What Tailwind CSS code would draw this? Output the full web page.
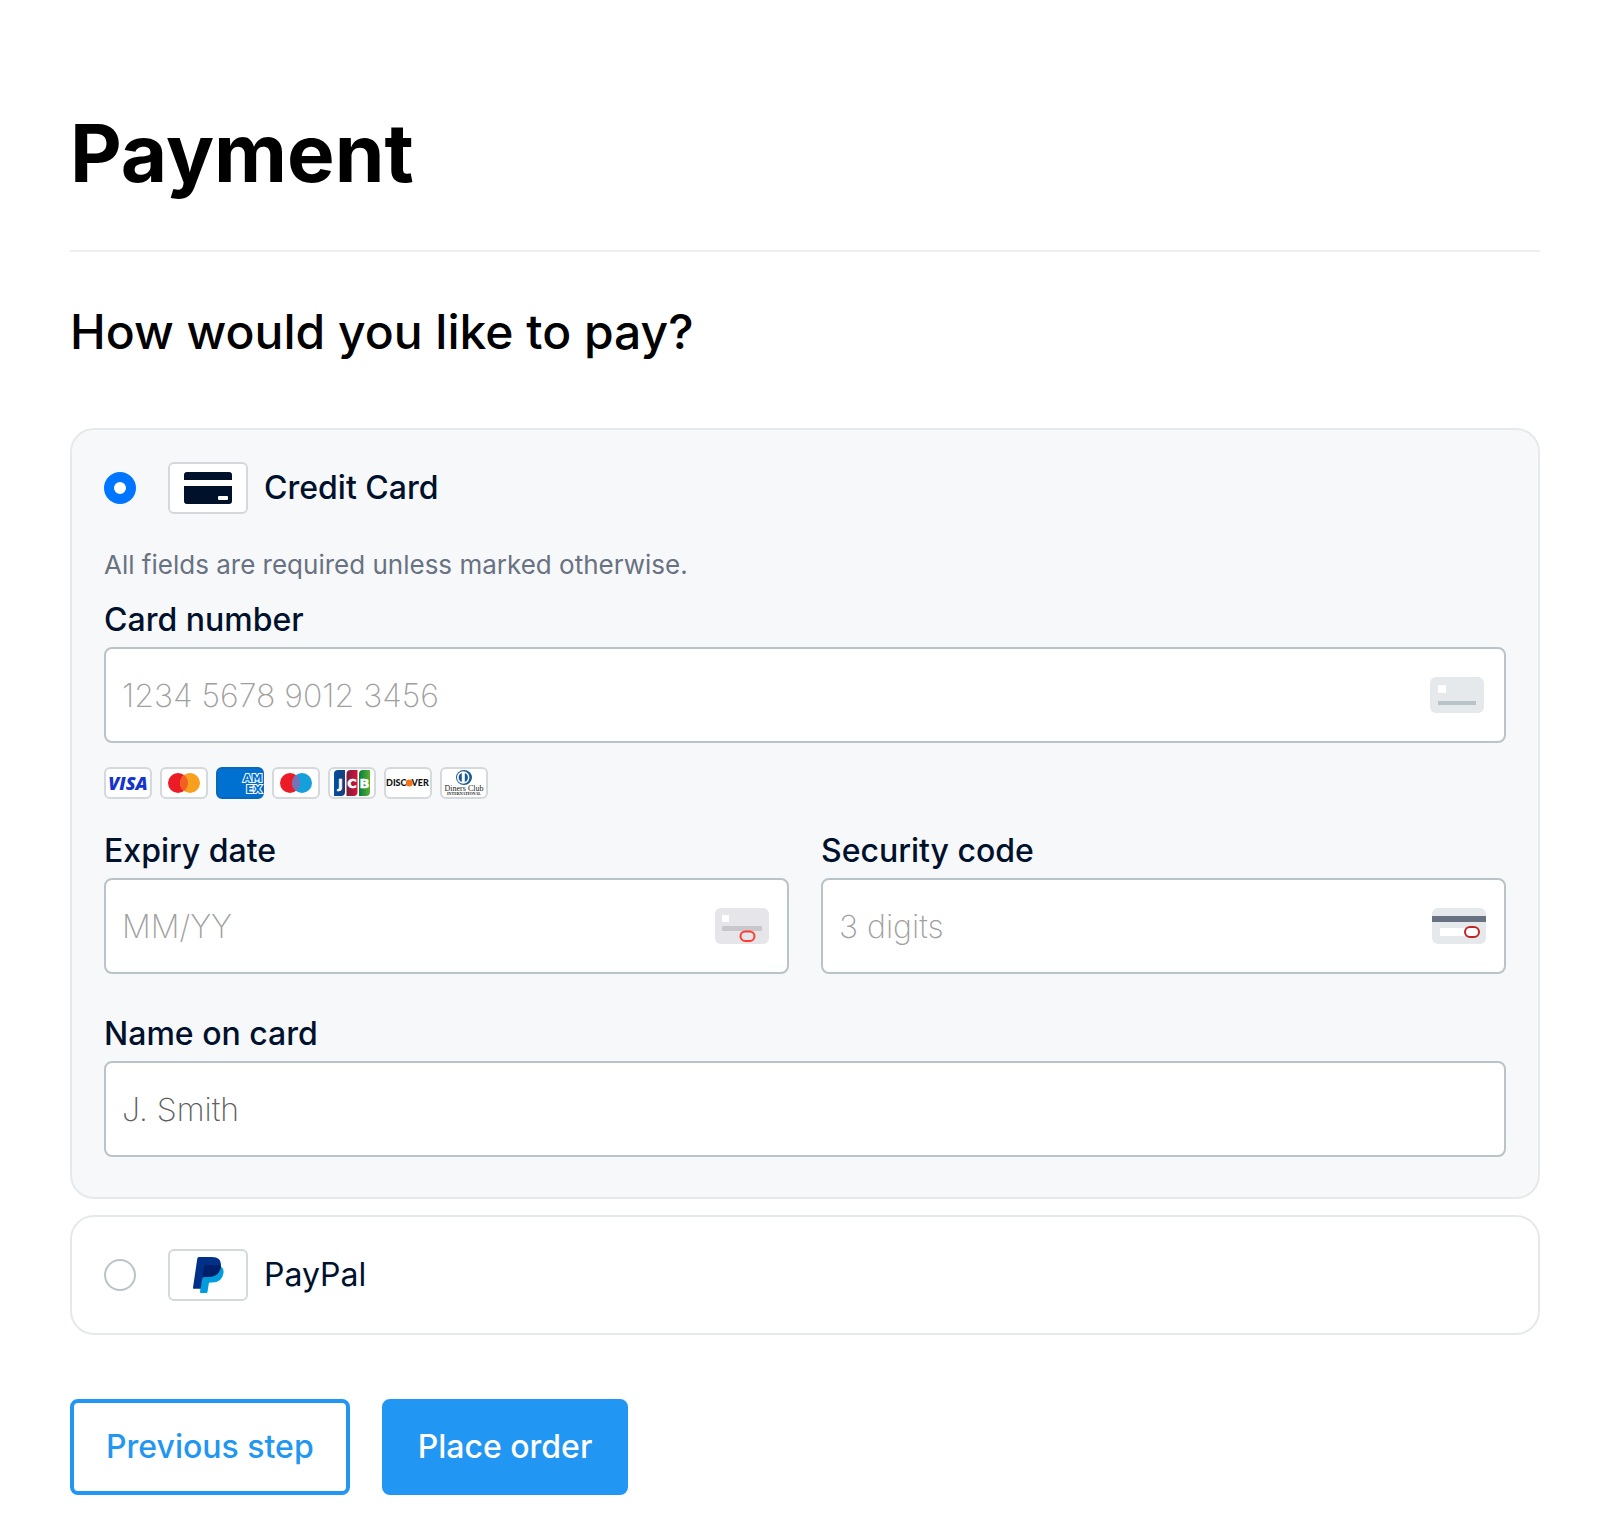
<!DOCTYPE html>
<html lang="en">
<head>
    <meta charset="UTF-8">
    <meta name="viewport" content="width=device-width, initial-scale=1.0">
    <title>Payment</title>
    <script src="https://cdn.jsdelivr.net/npm/@tailwindcss/browser@4"></script>
</head>
<body class="bg-white font-['Inter',sans-serif] text-black">

    <main class="pt-[105px] pb-11 pl-[70px] pr-[72px]">
        <h1 class="text-[80px] leading-24 font-bold">Payment</h1>
        <hr class="mt-[49px] border-t-2 border-[#eeeeee]">
        <h2 class="mt-12 text-5xl leading-16 font-medium">How would you like to pay?</h2>

        <form class="mt-16">
            <!-- Credit card -->
            <section class="rounded-3xl border-2 border-[#e6e9eb] bg-[#f7f8f9] px-8 pt-8 pb-10 text-[#00112c]">
                <div class="flex items-center">
                    <input type="radio" id="method-card" name="method" checked class="size-8 appearance-none rounded-full border-2 border-[#b9c4c9] bg-white checked:border-[10px] checked:border-[#0075ff]">
                    <label for="method-card" class="ml-8 flex items-center gap-4 text-[32px] leading-10 font-medium">
                        <span class="rounded-md border-2 border-[#d4d9db] bg-white">
                            <svg class="block h-12 w-19" viewBox="2 2 76 48" aria-hidden="true">
                                <path fill="#00112c" d="M16 18v-5a3 3 0 0 1 3-3h42a3 3 0 0 1 3 3v5zM16 24h48v15a3 3 0 0 1-3 3H19a3 3 0 0 1-3-3z"/>
                                <rect x="50" y="34" width="10" height="4" rx="1" fill="#fff"/>
                            </svg>
                        </span>
                        Credit Card
                    </label>
                </div>

                <p class="mt-8 text-[26px] leading-[38px] text-[#687282]">All fields are required unless marked otherwise.</p>

                <div class="mt-4">
                    <label for="card-number" class="mb-[7px] block text-[32px] leading-10 font-medium">Card number</label>
                    <div class="relative">
                        <input type="text" id="card-number" placeholder="1234 5678 9012 3456" class="block h-24 w-full rounded-lg border-2 border-[#b9c4c9] bg-white px-4 text-[32px] font-extralight placeholder:text-[#a0a0a0]">
                        <svg class="absolute right-[22px] top-[30px] h-9 w-[54px]" viewBox="0 0 54 36" aria-hidden="true">
                            <rect width="54" height="36" rx="6" fill="#e6e9eb"/>
                            <rect x="8" y="8" width="8" height="8" rx="1" fill="#fff"/>
                            <path fill="#b9c4c9" d="M8 24h38v4H8z"/>
                        </svg>
                    </div>
                </div>

                <!-- Accepted brands -->
                <div class="mt-6 flex gap-2">
                    <svg class="h-8 w-12" viewBox="0 0 48 32" role="img" aria-label="Visa">
                        <rect x="1" y="1" width="46" height="30" rx="5" fill="#fff" stroke="#d4d9db" stroke-width="2"/>
                        <text x="24" y="22.500" text-anchor="middle" font-family="Open Sans, sans-serif" font-size="18" font-weight="800" font-style="italic" fill="#1434cb">VISA</text>
                    </svg>
                    <svg class="h-8 w-12" viewBox="0 0 48 32" role="img" aria-label="Mastercard">
                        <rect x="1" y="1" width="46" height="30" rx="5" fill="#fff" stroke="#d4d9db" stroke-width="2"/>
                        <circle cx="18" cy="16" r="10" fill="#eb1c26"/>
                        <circle cx="30" cy="16" r="10" fill="#f79f1f"/>
                        <path fill="#f26122" d="M24 8a10 10 0 0 1 0 16 10 10 0 0 1 0-16z"/>
                    </svg>
                    <svg class="h-8 w-12" viewBox="0 0 48 32" role="img" aria-label="American Express">
                        <rect x="1" y="1" width="46" height="30" rx="5" fill="#0070d1" stroke="#0b67ba" stroke-width="2"/>
                        <g font-family="DejaVu Sans, sans-serif" font-size="11" font-weight="700" fill="#0070d1" stroke="#fff" stroke-width="2" paint-order="stroke">
                            <text x="27" y="15">AM</text>
                            <text x="30" y="26">EX</text>
                        </g>
                    </svg>
                    <svg class="h-8 w-12" viewBox="0 0 48 32" role="img" aria-label="Maestro">
                        <rect x="1" y="1" width="46" height="30" rx="5" fill="#fff" stroke="#d4d9db" stroke-width="2"/>
                        <circle cx="18" cy="16" r="10" fill="#eb1c26"/>
                        <circle cx="30" cy="16" r="10" fill="#159fdb"/>
                        <path fill="#7673b5" d="M24 8a10 10 0 0 1 0 16 10 10 0 0 1 0-16z"/>
                    </svg>
                    <svg class="h-8 w-12" viewBox="0 0 48 32" role="img" aria-label="JCB">
                        <defs>
                            <linearGradient id="jcb-blue"><stop stop-color="#00509f"/><stop offset="1" stop-color="#1c3c7c"/></linearGradient>
                            <linearGradient id="jcb-red"><stop stop-color="#7a1f3c"/><stop offset="1" stop-color="#d8103a"/></linearGradient>
                            <linearGradient id="jcb-green"><stop stop-color="#0a7a3c"/><stop offset="1" stop-color="#58b135"/></linearGradient>
                        </defs>
                        <rect x="1" y="1" width="46" height="30" rx="5" fill="#fff" stroke="#d4d9db" stroke-width="2"/>
                        <path fill="url(#jcb-blue)" d="M6 7q0-4 4-4h7v22q0 4-4 4H6z"/>
                        <path fill="url(#jcb-red)" d="M18.500 7q0-4 4-4h7v22q0 4-4 4h-7z"/>
                        <path fill="url(#jcb-green)" d="M31 7q0-4 4-4h7v22q0 4-4 4h-7z"/>
                        <g font-family="DejaVu Sans, sans-serif" font-size="13" font-weight="700" fill="#fff" stroke="#fff" stroke-width=".5" text-anchor="middle">
                            <text x="12.500" y="20.500">J</text>
                            <text x="24" y="20.500">C</text>
                            <text x="36.500" y="20.500">B</text>
                        </g>
                    </svg>
                    <svg class="h-8 w-12" viewBox="0 0 48 32" role="img" aria-label="Discover">
                        <rect x="1" y="1" width="46" height="30" rx="5" fill="#fff" stroke="#d4d9db" stroke-width="2"/>
                        <g font-family="Lato, sans-serif" font-size="9" font-weight="900" fill="#111">
                            <text x="22.500" y="19" text-anchor="end">DISC</text>
                            <text x="27.500" y="19">VER</text>
                        </g>
                        <circle cx="25.300" cy="16" r="3.500" fill="#f47216"/>
                    </svg>
                    <svg class="h-8 w-12" viewBox="0 0 48 32" role="img" aria-label="Diners Club International">
                        <rect x="1" y="1" width="46" height="30" rx="5" fill="#fff" stroke="#d4d9db" stroke-width="2"/>
                        <ellipse cx="24" cy="10.500" rx="8" ry="7.500" fill="#1a5a92"/>
                        <circle cx="23.200" cy="10.500" r="6.200" fill="#fff"/>
                        <path fill="#1a5a92" d="M21.800 6v9a4.800 4.800 0 0 1 0-9zM24.800 6v9a4.800 4.800 0 0 0 0-9z"/>
                        <text x="24" y="24" text-anchor="middle" font-family="Liberation Serif, serif" font-size="8" fill="#222">Diners Club</text>
                        <text x="24" y="28" text-anchor="middle" font-family="Liberation Serif, serif" font-size="4" font-weight="700" fill="#222">INTERNATIONAL</text>
                    </svg>
                </div>

                <div class="mt-8 grid grid-cols-2 gap-8">
                    <div>
                        <label for="expiry" class="mb-[7px] block text-[32px] leading-10 font-medium">Expiry date</label>
                        <div class="relative">
                            <input type="text" id="expiry" placeholder="MM/YY" class="block h-24 w-full rounded-lg border-2 border-[#b9c4c9] bg-white px-4 text-[32px] font-extralight placeholder:text-[#a0a0a0]">
                            <svg class="absolute right-5 top-[30px] h-9 w-[54px]" viewBox="0 0 54 36" aria-hidden="true">
                                <rect width="54" height="36" rx="6" fill="#e5e5ea"/>
                                <rect x="7" y="7" width="7" height="7" rx="1" fill="#fff"/>
                                <rect x="7" y="18" width="40" height="5" rx="1" fill="#c7c7cc"/>
                                <rect x="25.500" y="23.500" width="14" height="9.500" rx="4.700" fill="#e5e5ea" stroke="#ff3b30" stroke-width="2"/>
                            </svg>
                        </div>
                    </div>
                    <div>
                        <label for="security-code" class="mb-[7px] block text-[32px] leading-10 font-medium">Security code</label>
                        <div class="relative">
                            <input type="text" id="security-code" placeholder="3 digits" class="block h-24 w-full rounded-lg border-2 border-[#b9c4c9] bg-white px-4 text-[32px] font-extralight placeholder:text-[#a0a0a0]">
                            <svg class="absolute right-5 top-[30px] h-9 w-[54px]" viewBox="0 0 54 36" aria-hidden="true">
                                <rect width="54" height="36" rx="6" fill="#e6e9eb"/>
                                <path fill="#687282" d="M0 8h54v6H0z"/>
                                <rect x="8" y="20" width="32" height="8" rx="1" fill="#fff"/>
                                <rect x="33" y="19" width="14" height="10" rx="5" fill="#fff" stroke="#c12424" stroke-width="2"/>
                            </svg>
                        </div>
                    </div>
                </div>

                <div class="mt-10">
                    <label for="card-name" class="mb-[7px] block text-[32px] leading-10 font-medium">Name on card</label>
                    <input type="text" id="card-name" placeholder="J. Smith" class="block h-24 w-full rounded-lg border-2 border-[#b9c4c9] bg-white px-4 text-[32px] font-extralight placeholder:text-[#606060]">
                </div>
            </section>

            <!-- PayPal -->
            <section class="mt-4 rounded-3xl border-2 border-[#e6e9eb] bg-white p-8 text-[#00112c]">
                <div class="flex items-center">
                    <input type="radio" id="method-paypal" name="method" class="size-8 appearance-none rounded-full border-2 border-[#b9c4c9] bg-white checked:border-[10px] checked:border-[#0075ff]">
                    <label for="method-paypal" class="ml-8 flex items-center gap-4 text-[32px] leading-10">
                        <span class="rounded-md border-2 border-[#d4d9db] bg-white">
                            <svg class="block h-12 w-19" viewBox="2 2 76 48" aria-hidden="true">
                                <path fill="#009cde" d="M52.500 17q3.600 2.600 3 7-1.400 9.600-11.500 9.600h-2q-1 0-1.200 1l-1.300 8.400q-.2 1-1.200 1h-5.300q-1.200 0-1-1.200L35.500 18z"/>
                                <path fill="#003087" d="M31 8h13q9.500 0 9 8.500Q52 28 40 28h-4q-1.500 0-1.700 1.500l-1.600 10.200h-7q-.9 0-.7-1L29.300 9.500Q29.600 8 31 8z"/>
                                <path fill="#001f6b" d="M38 16h9q3.500 0 5.900 1.200Q51.500 28 40 28h-4q-1 0-1.500.7L36.300 17.500Q36.500 16 38 16z"/>
                            </svg>
                        </span>
                        PayPal
                    </label>
                </div>
            </section>

            <div class="mt-16 flex gap-8">
                <button type="button" class="h-24 rounded-lg border-4 border-[#2196f3] bg-white px-8 text-[32px] font-medium text-[#2196f3]">Previous step</button>
                <button type="submit" class="h-24 rounded-lg border-4 border-[#2196f3] bg-[#2196f3] px-8 text-[32px] font-medium text-white">Place order</button>
            </div>
        </form>
    </main>

</body>
</html>
